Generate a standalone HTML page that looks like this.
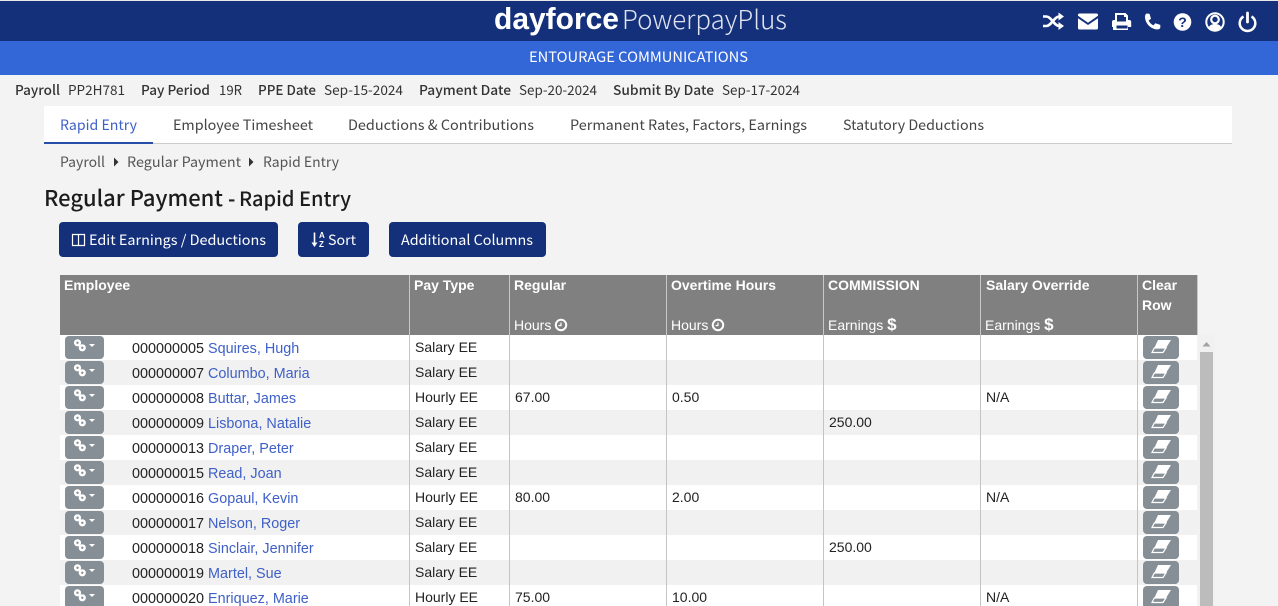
<!DOCTYPE html>
<html><head><meta charset="utf-8"><style>
html,body{margin:0;padding:0;width:1278px;height:606px;overflow:hidden;background:#f3f3f3}
body{position:relative;font-family:"Noto Sans CJK JP","Liberation Sans",sans-serif;font-size:14px;color:#333}
.a{position:absolute;white-space:nowrap}
svg{position:absolute;overflow:visible}
svg text{white-space:pre}
.o{font-family:"Noto Sans CJK JP","Liberation Sans",sans-serif}
.r{position:absolute;left:60px;width:1137px;height:25px}
.r.g{background:#f1f1f1}.r.w{background:#fff}
.c{position:absolute;top:0;width:1px;height:25px;background:#c4c4c4}
.t{position:absolute;font:14px/25px "Liberation Sans",sans-serif;color:#222;white-space:nowrap;top:0}
.t.e{font-size:14.4px;top:1px;left:72px;transform:translateY(1px)}
.t a{color:#3f60c8;text-decoration:none}
.b1{position:absolute;left:5px;top:1px;width:39px;height:23px;background:#868e96;border-radius:4px}
.b2{position:absolute;left:1083px;top:1px;width:36px;height:23px;background:#868e96;border-radius:4px}
.btn{position:absolute;top:222px;height:35px;background:#14307a;border-radius:4px}
.h{position:absolute;font:bold 14px/20px "Liberation Sans",sans-serif;color:#fff;white-space:nowrap}
.h2{font-weight:normal}
.h2 b{font-size:17px;line-height:17px}
</style></head><body>
<div class="a" style="left:0;top:0;width:1278px;height:1px;background:#e8e8e8"></div>
<div class="a" style="left:0;top:1px;width:1278px;height:40px;background:#14307a"></div>
<div class="a" style="left:0;top:41px;width:1278px;height:34px;background:#3366d6"></div>

<svg style="left:0;top:0" width="1278" height="75">
<text x="494" y="29" textLength="125" lengthAdjust="spacingAndGlyphs" font-family="Liberation Sans" font-weight="bold" font-size="31" fill="#fff">dayforce</text>
<text x="622" y="29" textLength="165" lengthAdjust="spacingAndGlyphs" font-family="Noto Sans CJK JP" font-weight="300" font-size="26" fill="#dfe4ee">PowerpayPlus</text>
<text x="529" y="62" textLength="219" lengthAdjust="spacingAndGlyphs" class="o" font-size="14" fill="#fff">ENTOURAGE COMMUNICATIONS</text>
<!-- shuffle -->
<g fill="none" stroke="#fff" stroke-width="2.600">
<path d="M1043 16.500h3.500c4.500 0 8 9.500 12.500 9.500h1.500"/>
<path d="M1043 26h3.500c4.500 0 8-9.500 12.500-9.500h1.500"/>
</g>
<path d="M1058.500 12.500l5.500 4-5.500 4zM1058.500 22l5.500 4-5.500 4z" fill="#fff"/>
<!-- envelope -->
<path d="M1079.500 13.500h17a1.500 1.500 0 0 1 1.500 1.500v.8l-10 7-10-7V15a1.500 1.500 0 0 1 1.500-1.500zM1078 18.200l10 6.800 10-6.800V28a1.500 1.500 0 0 1-1.500 1.500h-17A1.500 1.500 0 0 1 1078 28z" fill="#fff"/>
<!-- print -->
<path fill="#fff" fill-rule="evenodd" d="M1115 13h10.500l2.500 2.500V20h1.200a2 2 0 0 1 2 2v5h-3.200v3h-15v-3H1112v-5a2 2 0 0 1 2-2h1zM1117 15v6.500h9V17h-2v-2zM1116.500 25.500v3h11v-3z"/>
<!-- phone -->
<path fill="#fff" d="M1146.500 13.500l3 .2 1.500 5-2.300 1.800c1 2.300 2.600 3.900 4.700 4.900l1.900-2.200 5 1.700v2.900c-.5 1.400-2 1.700-3.200 1.700-7.300-.7-12.300-7-12.100-13.100.1-1.300.7-2.400 1.500-2.900z"/>
<!-- question -->
<circle cx="1182.500" cy="22" r="8.800" fill="#fff"/>
<text x="1182.500" y="27" text-anchor="middle" font-family="Liberation Sans" font-weight="bold" font-size="14" fill="#14307a">?</text>
<!-- user circle -->
<circle cx="1215" cy="22" r="8.700" fill="none" stroke="#fff" stroke-width="2"/>
<circle cx="1215" cy="19.500" r="3.800" fill="none" stroke="#fff" stroke-width="2.200"/>
<path d="M1208.500 28c1-3 3.500-4 6.500-4s5.500 1 6.500 4l-2.500 2.500h-8z" fill="#fff"/>
<!-- power -->
<path d="M1243.500 16.500a7.800 7.800 0 1 0 8 0" fill="none" stroke="#fff" stroke-width="2.500"/>
<path d="M1247.500 13v9" fill="none" stroke="#fff" stroke-width="2.800" stroke-linecap="round"/>
</svg>

<svg style="left:0;top:75px" width="1278" height="32">
<g class="o" font-size="13.500" fill="#333">
<text x="15" y="20" textLength="45" lengthAdjust="spacingAndGlyphs" font-weight="500">Payroll</text>
<text x="68" y="20" textLength="57" lengthAdjust="spacingAndGlyphs">PP2H781</text>
<text x="141" y="20" textLength="69" lengthAdjust="spacingAndGlyphs" font-weight="500">Pay Period</text>
<text x="219" y="20" textLength="23" lengthAdjust="spacingAndGlyphs">19R</text>
<text x="258" y="20" textLength="58" lengthAdjust="spacingAndGlyphs" font-weight="500">PPE Date</text>
<text x="324" y="20" textLength="79" lengthAdjust="spacingAndGlyphs">Sep-15-2024</text>
<text x="419" y="20" textLength="92" lengthAdjust="spacingAndGlyphs" font-weight="500">Payment Date</text>
<text x="519" y="20" textLength="78" lengthAdjust="spacingAndGlyphs">Sep-20-2024</text>
<text x="613" y="20" textLength="101" lengthAdjust="spacingAndGlyphs" font-weight="500">Submit By Date</text>
<text x="722" y="20" textLength="78" lengthAdjust="spacingAndGlyphs">Sep-17-2024</text>
</g></svg>

<div class="a" style="left:44px;top:106px;width:1188px;height:37px;background:#fff"></div>
<div class="a" style="left:44px;top:143px;width:1188px;height:1px;background:#ccc"></div>
<div class="a" style="left:44px;top:142px;width:109px;height:2px;background:#264da8"></div>
<svg style="left:0;top:106px" width="1278" height="40">
<g class="o" font-size="14" fill="#444">
<text x="60" y="24" textLength="77" lengthAdjust="spacingAndGlyphs" fill="#3f60c8">Rapid Entry</text>
<text x="173" y="24" textLength="140" lengthAdjust="spacingAndGlyphs">Employee Timesheet</text>
<text x="348" y="24" textLength="186" lengthAdjust="spacingAndGlyphs">Deductions &amp; Contributions</text>
<text x="570" y="24" textLength="237" lengthAdjust="spacingAndGlyphs">Permanent Rates, Factors, Earnings</text>
<text x="843" y="24" textLength="141" lengthAdjust="spacingAndGlyphs">Statutory Deductions</text>
</g></svg>

<svg style="left:0;top:146px" width="500" height="120">
<g class="o" font-size="14" fill="#555">
<text x="60" y="21" textLength="45" lengthAdjust="spacingAndGlyphs">Payroll</text>
<text x="127" y="21" textLength="114" lengthAdjust="spacingAndGlyphs">Regular Payment</text>
<text x="263" y="21" textLength="76" lengthAdjust="spacingAndGlyphs">Rapid Entry</text>
</g>
<path d="M114 11.500l4.500 4.500-4.500 4.500zM249 11.500l4.500 4.500-4.500 4.500z" fill="#333"/>
<text x="44" y="60" textLength="179" lengthAdjust="spacingAndGlyphs" class="o" font-size="22" font-weight="500" fill="#1c1c1c">Regular Payment</text>
<text x="228" y="60" class="o" font-size="20" font-weight="bold" fill="#222">-</text>
<text x="239" y="60" textLength="112" lengthAdjust="spacingAndGlyphs" class="o" font-size="20" font-weight="500" fill="#1c1c1c">Rapid Entry</text>
</svg>

<div class="btn" style="left:59px;width:219px"></div>
<div class="btn" style="left:298px;width:71px"></div>
<div class="btn" style="left:389px;width:157px"></div>
<svg style="left:0;top:222px" width="600" height="36">
<g class="o" font-size="14" fill="#fff">
<text x="89" y="23" textLength="177" lengthAdjust="spacingAndGlyphs">Edit Earnings / Deductions</text>
<text x="328" y="23" textLength="28" lengthAdjust="spacingAndGlyphs">Sort</text>
<text x="401" y="23" textLength="132" lengthAdjust="spacingAndGlyphs">Additional Columns</text>
</g>
<path d="M72.500 12.500h12v11h-12zM78.500 12.500v11" fill="none" stroke="#fff" stroke-width="1.200"/>
<path d="M314.500 10.500v12" stroke="#fff" stroke-width="1.600"/>
<path d="M311.500 20.500l3 4.500 3-4.500z" fill="#fff"/>
<text x="319" y="16" font-family="Liberation Sans" font-weight="bold" font-size="8" fill="#fff">A</text>
<text x="319" y="25" font-family="Liberation Sans" font-weight="bold" font-size="8" fill="#fff">Z</text>
</svg>

<!-- table header -->
<div class="a" style="left:60px;top:275px;width:1137px;height:60px;background:#808080"></div>
<div class="a" style="left:409px;top:275px;width:1px;height:60px;background:#c8c8c8"></div>
<div class="a" style="left:509px;top:275px;width:1px;height:60px;background:#c8c8c8"></div>
<div class="a" style="left:666px;top:275px;width:1px;height:60px;background:#c8c8c8"></div>
<div class="a" style="left:823px;top:275px;width:1px;height:60px;background:#c8c8c8"></div>
<div class="a" style="left:980px;top:275px;width:1px;height:60px;background:#c8c8c8"></div>
<div class="a" style="left:1137px;top:275px;width:1px;height:60px;background:#c8c8c8"></div>
<div class="a" style="left:1197px;top:275px;width:1px;height:60px;background:#c8c8c8"></div>
<div class="h" style="left:64px;top:275px">Employee</div>
<div class="h" style="left:414px;top:275px">Pay Type</div>
<div class="h" style="left:514px;top:275px">Regular</div>
<div class="h h2" style="left:514px;top:315px">Hours</div>
<div class="h" style="left:671px;top:275px">Overtime Hours</div>
<div class="h h2" style="left:671px;top:315px">Hours</div>
<div class="h" style="left:828px;top:275px">COMMISSION</div>
<div class="h h2" style="left:828px;top:315px">Earnings <b>$</b></div>
<div class="h" style="left:986px;top:275px">Salary Override</div>
<div class="h h2" style="left:985px;top:315px">Earnings <b>$</b></div>
<div class="h" style="left:1142px;top:275px">Clear</div>
<div class="h" style="left:1142px;top:295px">Row</div>
<svg style="left:0;top:315px" width="800" height="20">
<g fill="none" stroke="#fff"><circle cx="561" cy="10" r="5.200" stroke-width="2"/><path d="M561 7.500V10.500H558.500" stroke-width="1.200"/>
<circle cx="718" cy="10" r="5.200" stroke-width="2"/><path d="M718 7.500V10.500H715.500" stroke-width="1.200"/></g>
</svg>

<!-- rows -->
<div class="r w" style="top:335px"><i class="c" style="left:349px"></i><i class="c" style="left:449px"></i><i class="c" style="left:606px"></i><i class="c" style="left:763px"></i><i class="c" style="left:920px"></i><i class="c" style="left:1077px"></i><div class="b1"></div><div class="b2"></div><div class="t e">000000005 <a>Squires, Hugh</a></div><div class="t" style="left:355px">Salary EE</div></div>
<div class="r g" style="top:360px"><i class="c" style="left:349px"></i><i class="c" style="left:449px"></i><i class="c" style="left:606px"></i><i class="c" style="left:763px"></i><i class="c" style="left:920px"></i><i class="c" style="left:1077px"></i><div class="b1"></div><div class="b2"></div><div class="t e">000000007 <a>Columbo, Maria</a></div><div class="t" style="left:355px">Salary EE</div></div>
<div class="r w" style="top:385px"><i class="c" style="left:349px"></i><i class="c" style="left:449px"></i><i class="c" style="left:606px"></i><i class="c" style="left:763px"></i><i class="c" style="left:920px"></i><i class="c" style="left:1077px"></i><div class="b1"></div><div class="b2"></div><div class="t e">000000008 <a>Buttar, James</a></div><div class="t" style="left:355px">Hourly EE</div><div class="t" style="left:455px">67.00</div><div class="t" style="left:612px">0.50</div><div class="t" style="left:926px">N/A</div></div>
<div class="r g" style="top:410px"><i class="c" style="left:349px"></i><i class="c" style="left:449px"></i><i class="c" style="left:606px"></i><i class="c" style="left:763px"></i><i class="c" style="left:920px"></i><i class="c" style="left:1077px"></i><div class="b1"></div><div class="b2"></div><div class="t e">000000009 <a>Lisbona, Natalie</a></div><div class="t" style="left:355px">Salary EE</div><div class="t" style="left:769px">250.00</div></div>
<div class="r w" style="top:435px"><i class="c" style="left:349px"></i><i class="c" style="left:449px"></i><i class="c" style="left:606px"></i><i class="c" style="left:763px"></i><i class="c" style="left:920px"></i><i class="c" style="left:1077px"></i><div class="b1"></div><div class="b2"></div><div class="t e">000000013 <a>Draper, Peter</a></div><div class="t" style="left:355px">Salary EE</div></div>
<div class="r g" style="top:460px"><i class="c" style="left:349px"></i><i class="c" style="left:449px"></i><i class="c" style="left:606px"></i><i class="c" style="left:763px"></i><i class="c" style="left:920px"></i><i class="c" style="left:1077px"></i><div class="b1"></div><div class="b2"></div><div class="t e">000000015 <a>Read, Joan</a></div><div class="t" style="left:355px">Salary EE</div></div>
<div class="r w" style="top:485px"><i class="c" style="left:349px"></i><i class="c" style="left:449px"></i><i class="c" style="left:606px"></i><i class="c" style="left:763px"></i><i class="c" style="left:920px"></i><i class="c" style="left:1077px"></i><div class="b1"></div><div class="b2"></div><div class="t e">000000016 <a>Gopaul, Kevin</a></div><div class="t" style="left:355px">Hourly EE</div><div class="t" style="left:455px">80.00</div><div class="t" style="left:612px">2.00</div><div class="t" style="left:926px">N/A</div></div>
<div class="r g" style="top:510px"><i class="c" style="left:349px"></i><i class="c" style="left:449px"></i><i class="c" style="left:606px"></i><i class="c" style="left:763px"></i><i class="c" style="left:920px"></i><i class="c" style="left:1077px"></i><div class="b1"></div><div class="b2"></div><div class="t e">000000017 <a>Nelson, Roger</a></div><div class="t" style="left:355px">Salary EE</div></div>
<div class="r w" style="top:535px"><i class="c" style="left:349px"></i><i class="c" style="left:449px"></i><i class="c" style="left:606px"></i><i class="c" style="left:763px"></i><i class="c" style="left:920px"></i><i class="c" style="left:1077px"></i><div class="b1"></div><div class="b2"></div><div class="t e">000000018 <a>Sinclair, Jennifer</a></div><div class="t" style="left:355px">Salary EE</div><div class="t" style="left:769px">250.00</div></div>
<div class="r g" style="top:560px"><i class="c" style="left:349px"></i><i class="c" style="left:449px"></i><i class="c" style="left:606px"></i><i class="c" style="left:763px"></i><i class="c" style="left:920px"></i><i class="c" style="left:1077px"></i><div class="b1"></div><div class="b2"></div><div class="t e">000000019 <a>Martel, Sue</a></div><div class="t" style="left:355px">Salary EE</div></div>
<div class="r w" style="top:585px"><i class="c" style="left:349px"></i><i class="c" style="left:449px"></i><i class="c" style="left:606px"></i><i class="c" style="left:763px"></i><i class="c" style="left:920px"></i><i class="c" style="left:1077px"></i><div class="b1"></div><div class="b2"></div><div class="t e">000000020 <a>Enriquez, Marie</a></div><div class="t" style="left:355px">Hourly EE</div><div class="t" style="left:455px">75.00</div><div class="t" style="left:612px">10.00</div><div class="t" style="left:926px">N/A</div></div>

<!-- button icons -->
<svg style="left:0;top:335px" width="1278" height="271">
<defs>
<g id="lk"><g fill="none" stroke="#fff" stroke-width="2.400"><circle cx="77.500" cy="7.800" r="2.400"/><circle cx="82.300" cy="12.800" r="2.400"/></g><path d="M79 9.500l2 2" stroke="#fff" stroke-width="2.400"/><path d="M89 9h6l-3 3z" fill="#fff"/></g>
<g id="er"><path d="M1158 5h13l-5 8h-11.700z" fill="#fff"/><path d="M1154.300 13h11.700l-3 4.500h-11z" fill="none" stroke="#fff" stroke-width="1.200"/></g>
</defs>
<use href="#lk"/><use href="#er"/>
<use href="#lk" y="25"/><use href="#er" y="25"/>
<use href="#lk" y="50"/><use href="#er" y="50"/>
<use href="#lk" y="75"/><use href="#er" y="75"/>
<use href="#lk" y="100"/><use href="#er" y="100"/>
<use href="#lk" y="125"/><use href="#er" y="125"/>
<use href="#lk" y="150"/><use href="#er" y="150"/>
<use href="#lk" y="175"/><use href="#er" y="175"/>
<use href="#lk" y="200"/><use href="#er" y="200"/>
<use href="#lk" y="225"/><use href="#er" y="225"/>
<use href="#lk" y="250"/><use href="#er" y="250"/>
</svg>

<!-- scrollbar -->
<div class="a" style="left:1198px;top:335px;width:17px;height:271px;background:#f1f1f1"></div>
<div class="a" style="left:1200px;top:352px;width:13px;height:254px;background:#bcbcbc"></div>
<svg style="left:1198px;top:335px" width="17" height="17"><path d="M8.500 7l4 4.500h-8z" fill="#a3a3a3"/></svg>
</body></html>
